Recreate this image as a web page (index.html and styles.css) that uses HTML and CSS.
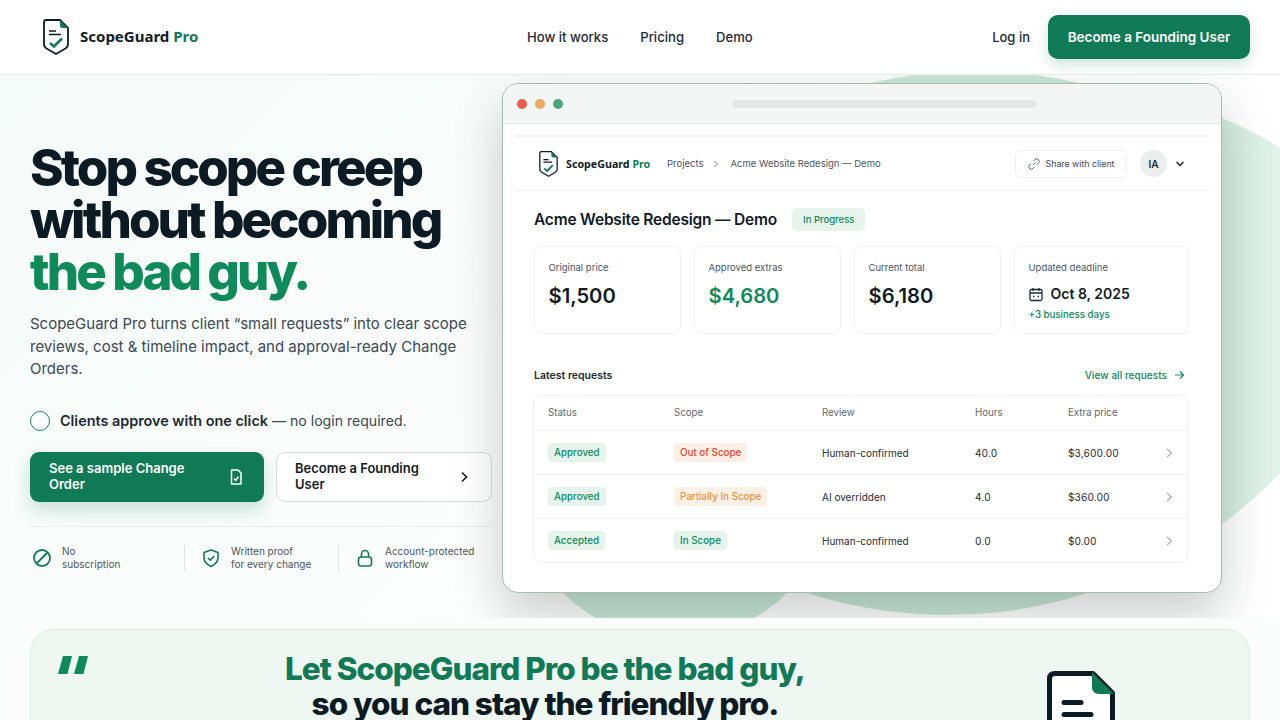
FILE: index.html
```html
<!DOCTYPE html>
<html lang="en">
<head>
    <meta charset="UTF-8">
    <meta name="viewport" content="width=device-width, initial-scale=1.0">
    <title>ScopeGuard Pro</title>
    <link rel="stylesheet" href="styles.css">
</head>
<body>

<svg class="defs" width="0" height="0">
    <symbol id="logo" viewBox="0 0 26 36">
        <path d="M3 1H17L25 9V25Q25 28 22.500 29.500L13 35L3.500 29.500Q1 28 1 25V3Q1 1 3 1Z" fill="#fff" stroke="#0f1c27" stroke-width="1.800" stroke-linejoin="round"/>
        <path d="M17 1L25 9H19.500Q17 9 17 6.500Z" fill="#0f7a55"/>
        <path d="M6 12H13M6 15.500H18" stroke="#0f1c27" stroke-width="1.600" fill="none"/>
        <path d="M7 24L11 27.500L19 19.500" stroke="#0f7a55" stroke-width="2.600" fill="none"/>
    </symbol>
</svg>

<!-- Top bar -->
<header class="topbar">
    <a class="brand">
        <svg class="brand-logo"><use href="#logo"/></svg>
        <span>ScopeGuard <em>Pro</em></span>
    </a>
    <nav class="nav">
        <a>How it works</a>
        <a>Pricing</a>
        <a>Demo</a>
    </nav>
    <div class="topbar-right">
        <a class="login">Log in</a>
        <button class="btn-cta">Become a Founding User</button>
    </div>
</header>

<section class="hero">
    <svg class="blob" viewBox="0 0 1280 543">
        <defs>
            <linearGradient id="blobFill" gradientUnits="userSpaceOnUse" x1="1180" x2="1280" y1="0" y2="0">
                <stop offset="0" stop-color="#c9e7d8"/>
                <stop offset="1" stop-color="#e2f3ea"/>
            </linearGradient>
        </defs>
        <path d="M870 8Q975 -16 1080 8C1130 18 1180 26 1222 43Q1255 57 1280 73C1325 110 1340 260 1280 398A461 461 0 0 1 807 518Z" fill="url(#blobFill)"/>
        <circle cx="675" cy="405" r="159" fill="#c9e7d8"/>
    </svg>

    <div class="hero-copy">
        <h1>Stop scope creep<br>without becoming<br><span>the bad guy.</span></h1>
        <p class="lead">ScopeGuard Pro turns client “small requests” into clear scope reviews, cost &amp; timeline impact, and approval-ready Change Orders.</p>
        <p class="approve"><i class="ring"></i><span><b>Clients approve with one click</b> — no login required.</span></p>
        <div class="hero-btns">
            <a class="btn-primary">
                <span>See a sample Change Order</span>
                <svg width="14" height="16" viewBox="0 0 14 16" fill="none" stroke="#fff" stroke-width="1.500"><path d="M2.500 1H9L12 4V15H2.500Z" stroke-linejoin="round"/><path d="M5 9.500L6.800 11.300L9.500 7.800"/></svg>
            </a>
            <a class="btn-outline">
                <span>Become a Founding User</span>
                <svg width="10" height="12" viewBox="0 0 10 12" fill="none" stroke="#111c26" stroke-width="1.600"><path d="M3 1.500L7.500 6L3 10.500"/></svg>
            </a>
        </div>
        <div class="perks">
            <div class="perk">
                <svg width="20" height="20" viewBox="0 0 20 20" fill="none" stroke="#0f7a55" stroke-width="1.800"><circle cx="10" cy="10" r="8"/><path d="M4.500 15.500L15.500 4.500"/></svg>
                <span>No<br>subscription</span>
            </div>
            <div class="perk">
                <svg width="20" height="20" viewBox="0 0 20 20" fill="none" stroke="#0f7a55" stroke-width="1.600"><path d="M10 2L17 4.500V10C17 14 14 16.500 10 18.500C6 16.500 3 14 3 10V4.500Z" stroke-linejoin="round"/><path d="M7 10L9.300 12.200L13.200 8"/></svg>
                <span>Written proof<br>for every change</span>
            </div>
            <div class="perk">
                <svg width="20" height="20" viewBox="0 0 20 20" fill="none" stroke="#0f7a55" stroke-width="1.600"><rect x="3.500" y="9" width="13" height="9" rx="2.500"/><path d="M6.500 9V6A3.500 3.500 0 0 1 13.500 6V9"/></svg>
                <span>Account-protected<br>workflow</span>
            </div>
        </div>
    </div>

    <!-- App preview -->
    <div class="window">
        <div class="window-bar">
            <i class="dot dot-red"></i><i class="dot dot-amber"></i><i class="dot dot-green"></i>
            <i class="url"></i>
        </div>
        <div class="app">
            <div class="app-head">
                <svg class="app-logo"><use href="#logo"/></svg>
                <span class="app-brand">ScopeGuard <em>Pro</em></span>
                <span class="crumb">Projects</span>
                <svg class="crumb-sep" width="6" height="8" viewBox="0 0 6 8" fill="none" stroke="#7b858d" stroke-width="1"><path d="M1.500 1L4.500 4L1.500 7"/></svg>
                <span class="crumb">Acme Website Redesign — Demo</span>
                <a class="share">
                    <svg width="12" height="12" viewBox="0 0 12 12" fill="none" stroke="#5d6870" stroke-width="1"><path d="M5 7L7.500 4.500M5.500 3L7 1.500A2 2 0 0 1 10.500 5L9 6.500M6.500 9L5 10.500A2 2 0 0 1 1.500 7L3 5.500"/></svg>
                    Share with client
                </a>
                <span class="avatar">IA</span>
                <svg width="10" height="8" viewBox="0 0 10 8" fill="none" stroke="#1d2a34" stroke-width="1.400"><path d="M1.500 2L5 5.500L8.500 2"/></svg>
            </div>

            <div class="app-body">
                <div class="project-title">
                    <h2>Acme Website Redesign — Demo</h2>
                    <span class="progress">In Progress</span>
                </div>

                <div class="stats">
                    <div class="stat">
                        <p class="stat-label">Original price</p>
                        <p class="stat-value">$1,500</p>
                    </div>
                    <div class="stat">
                        <p class="stat-label">Approved extras</p>
                        <p class="stat-value green">$4,680</p>
                    </div>
                    <div class="stat">
                        <p class="stat-label">Current total</p>
                        <p class="stat-value">$6,180</p>
                    </div>
                    <div class="stat">
                        <p class="stat-label">Updated deadline</p>
                        <p class="stat-date">
                            <svg width="14" height="15" viewBox="0 0 14 15" fill="none" stroke="#1d2a34" stroke-width="1.300"><rect x="1" y="2.500" width="12" height="11" rx="1.500"/><path d="M1 6H13M4 1V4M10 1V4M4 9.500H5.500M8.500 9.500H10"/></svg>
                            Oct 8, 2025
                        </p>
                        <p class="stat-note">+3 business days</p>
                    </div>
                </div>

                <div class="requests-head">
                    <h3>Latest requests</h3>
                    <a>View all requests
                        <svg width="11" height="10" viewBox="0 0 11 10" fill="none" stroke="#0f8f5c" stroke-width="1.200"><path d="M1 5H9.500M6 1.500L9.500 5L6 8.500"/></svg>
                    </a>
                </div>

                <div class="table">
                    <div class="row row-head">
                        <span>Status</span><span>Scope</span><span>Review</span><span>Hours</span><span>Extra price</span>
                    </div>
                    <div class="row">
                        <span><b class="pill pill-green">Approved</b></span>
                        <span><b class="pill pill-red">Out of Scope</b></span>
                        <span>Human-confirmed</span><span class="num">40.0</span><span class="num">$3,600.00</span>
                        <svg width="7" height="10" viewBox="0 0 7 10" fill="none" stroke="#a3abb0" stroke-width="1.100"><path d="M1 1L5.500 5L1 9"/></svg>
                    </div>
                    <div class="row">
                        <span><b class="pill pill-green">Approved</b></span>
                        <span><b class="pill pill-orange">Partially In Scope</b></span>
                        <span>AI overridden</span><span class="num">4.0</span><span class="num">$360.00</span>
                        <svg width="7" height="10" viewBox="0 0 7 10" fill="none" stroke="#a3abb0" stroke-width="1.100"><path d="M1 1L5.500 5L1 9"/></svg>
                    </div>
                    <div class="row">
                        <span><b class="pill pill-green">Accepted</b></span>
                        <span><b class="pill pill-green">In Scope</b></span>
                        <span>Human-confirmed</span><span class="num">0.0</span><span class="num">$0.00</span>
                        <svg width="7" height="10" viewBox="0 0 7 10" fill="none" stroke="#a3abb0" stroke-width="1.100"><path d="M1 1L5.500 5L1 9"/></svg>
                    </div>
                </div>
            </div>
        </div>
    </div>
</section>

<!-- Bad guy banner -->
<section class="banner">
    <svg class="quote" width="30" height="18" viewBox="0 0 30 18" fill="#0f8a5b"><path d="M5 0H14L9.500 18H0ZM21 0H30L25.500 18H16Z"/></svg>
    <h2 class="banner-title"><span>Let ScopeGuard Pro be the bad guy,</span><br>so you can stay the friendly pro.</h2>
    <svg class="banner-doc" width="68" height="90" viewBox="0 0 68 90">
        <path d="M8 2.500H46L65.500 22V82Q65.500 87.500 60 87.500H8Q2.500 87.500 2.500 82V8Q2.500 2.500 8 2.500Z" fill="#fff" stroke="#0c1a24" stroke-width="5" stroke-linejoin="round"/>
        <path d="M45 1L67 23H52Q45 23 45 16Z" fill="#0f7a55"/>
        <path d="M17 31.500H34M17 43.500H44" stroke="#0c1a24" stroke-width="5" stroke-linecap="round" fill="none"/>
    </svg>
</section>

</body>
</html>
```

FILE: styles.css
```css
* {
    margin: 0;
    padding: 0;
    box-sizing: border-box;
}
html, body {
    height: 100vh;
    overflow: hidden;
}
body {
    font-family: "Inter", "Liberation Sans", sans-serif;
    color: #0f1c27;
    background: #fbfdfc;
}
em {
    font-style: normal;
}
.defs {
    display: block;
    height: 0;
}

/* top bar */
.topbar {
    height: 75px;
    display: grid;
    grid-template-columns: 484px 1fr auto;
    align-items: center;
    padding: 0 30px 1px 43px;
    background: #fff;
    border-bottom: 1px solid #e6eaea;
}
.brand {
    display: flex;
    align-items: center;
    gap: 11px;
    font-family: "Noto Sans", sans-serif;
    font-weight: 700;
    font-size: 15px;
    line-height: 18px;
    color: #111c26;
}
.brand span {
    margin-top: -2px;
}
.brand-logo {
    width: 26px;
    height: 36px;
}
.brand em {
    color: #0f7a55;
}
.nav {
    display: flex;
    gap: 32px;
    font-size: 13.100px;
    font-weight: 500;
    color: #1d2a34;
}
.topbar-right {
    display: flex;
    align-items: center;
    gap: 18px;
}
.login {
    font-size: 13px;
    font-weight: 500;
    color: #1d2a34;
}
.btn-cta {
    width: 202px;
    height: 44px;
    border: none;
    border-radius: 10px;
    background: #0f7a55;
    color: #fff;
    font-family: inherit;
    font-size: 13.500px;
    font-weight: 600;
    box-shadow: 0 6px 14px rgba(15, 122, 85, 0.2);
}

/* hero */
.hero {
    position: relative;
    height: 543px;
    display: grid;
    grid-template-columns: 462px 720px;
    column-gap: 10px;
    padding: 8px 0 0 30px;
    overflow: hidden;
    background: linear-gradient(135deg, #f5fbf9 0%, #fbfdfc 45%, #ffffff 70%);
}
.blob {
    position: absolute;
    left: 0;
    top: 0;
    width: 1280px;
    height: 543px;
}
.hero-copy {
    position: relative;
    padding-top: 59px;
}
h1 {
    font-size: 51px;
    line-height: 52px;
    font-weight: 800;
    letter-spacing: -2.900px;
    color: #0c1a24;
}
h1 span {
    color: #0f8a5b;
}
.lead {
    margin-top: 15px;
    font-size: 15px;
    line-height: 22.700px;
    color: #3c4853;
}
.approve {
    margin-top: 29.500px;
    display: flex;
    align-items: center;
    gap: 10px;
    font-size: 14.100px;
    color: #3c4853;
}
.approve b {
    font-size: 14.400px;
    font-weight: 600;
    color: #1d2a34;
}
.ring {
    width: 20px;
    height: 20px;
    border: 1.500px solid #0f8a5b;
    border-radius: 50%;
    background: #fff;
}
.hero-btns {
    margin-top: 21px;
    display: grid;
    grid-template-columns: 234px 216px;
    gap: 12px;
}
.btn-primary, .btn-outline {
    height: 50px;
    display: flex;
    align-items: center;
    justify-content: space-between;
    border-radius: 9px;
    font-size: 13px;
    line-height: 16px;
    font-weight: 600;
}
.btn-primary span, .btn-outline span {
    margin-top: -2px;
}
.btn-primary {
    padding: 0 21px 0 19px;
    background: #0f7a55;
    color: #fff;
    box-shadow: 0 8px 18px rgba(15, 122, 85, 0.22);
}
.btn-primary span {
    width: 160px;
}
.btn-outline {
    padding: 0 22px 0 18px;
    background: #fff;
    border: 1px solid #d5dadb;
    color: #111c26;
}
.btn-outline span {
    width: 140px;
}
.perks {
    margin-top: 24px;
    padding-top: 18px;
    display: flex;
    border-top: 1px solid #e8eeec;
}
.perk {
    display: flex;
    align-items: center;
    gap: 10px;
    height: 26px;
    padding-left: 16px;
    border-left: 1px solid #dfe4e3;
    font-size: 10px;
    line-height: 13px;
    color: #4b5661;
}
.perk:first-child {
    width: 154px;
    padding-left: 2px;
    border-left: none;
}
.perk:nth-child(2) {
    width: 154px;
}

/* app preview */
.window {
    position: relative;
    height: 510px;
    background: #fff;
    border: 1px solid #a9b8b1;
    border-radius: 16px;
    overflow: hidden;
    box-shadow: 0 22px 50px rgba(15, 30, 25, 0.22);
}
.window-bar {
    height: 40px;
    display: flex;
    align-items: center;
    padding-left: 14px;
    gap: 8px;
    background: #f4f6f5;
    border-bottom: 1px solid #e2e8e5;
}
.dot {
    width: 10px;
    height: 10px;
    border-radius: 50%;
}
.dot-red {
    background: #ef5b4c;
}
.dot-amber {
    background: #efa95f;
}
.dot-green {
    background: #4aa878;
}
.url {
    width: 304px;
    height: 8px;
    margin-left: 162px;
    border-radius: 4px;
    background: #e4e7e6;
}
.app {
    margin: 11px 12px 0;
    border-top: 2px solid #f0f3f2;
}
.app-head {
    height: 54px;
    display: flex;
    align-items: center;
    padding: 0 24px;
    border-bottom: 1px solid #f0f2f2;
    font-size: 9.500px;
    color: #4b5661;
}
.app-logo {
    width: 19px;
    height: 26px;
    margin-right: 8px;
}
.app-brand {
    width: 101px;
    font-family: "Noto Sans", sans-serif;
    font-weight: 700;
    font-size: 10.700px;
    color: #111c26;
}
.app-brand em {
    color: #0f7a55;
}
.crumb-sep {
    margin: 0 11px 0 10px;
}
.share {
    display: flex;
    align-items: center;
    justify-content: center;
    gap: 6px;
    width: 112px;
    height: 28px;
    margin-left: auto;
    border: 1px solid #eceeee;
    border-radius: 6px;
    font-size: 8.800px;
    color: #3c4853;
}
.avatar {
    width: 27px;
    height: 27px;
    margin: 0 8px 0 13px;
    display: flex;
    align-items: center;
    justify-content: center;
    border-radius: 50%;
    background: #eceeee;
    font-size: 10px;
    font-weight: 600;
    color: #1d2a34;
}
.app-body {
    padding: 17px 21px 0 18px;
}
.project-title {
    display: flex;
    align-items: center;
    gap: 14px;
}
.project-title h2 {
    margin-left: 1px;
    font-size: 15.500px;
    font-weight: 600;
    letter-spacing: -0.200px;
    color: #0f1c27;
}
.progress {
    padding: 6px 11px 5px;
    margin-left: 1px;
    border-radius: 5px;
    background: #e6f4ed;
    color: #0f8a5b;
    font-size: 9.500px;
    line-height: 12px;
    font-weight: 500;
}
.stats {
    margin: 15px 0 0 0.500px;
    display: grid;
    grid-template-columns: 147.500px 147.500px 147.500px 175px;
    gap: 12.500px;
}
.stat {
    height: 88px;
    padding: 15px 14px 0;
    border: 1px solid #f0f2f1;
    border-radius: 8px;
}
.stat-label {
    font-size: 9.500px;
    line-height: 12px;
    color: #4b5661;
}
.stat-value {
    margin-top: 9px;
    font-size: 20.200px;
    line-height: 26px;
    font-weight: 600;
    color: #0f1c27;
}
.stat-value.green {
    color: #0f8a5b;
}
.stat-date {
    margin-top: 10px;
    display: flex;
    align-items: center;
    gap: 8px;
    font-size: 14px;
    line-height: 20px;
    font-weight: 600;
}
.stat-note {
    margin-top: 5px;
    font-size: 9.700px;
    line-height: 12px;
    font-weight: 500;
    color: #0f8a5b;
}
.requests-head {
    margin-top: 34px;
    display: flex;
    justify-content: space-between;
    align-items: center;
    height: 14px;
}
.requests-head h3 {
    margin-left: 1px;
    font-size: 10.500px;
    font-weight: 600;
    color: #1d2a34;
}
.requests-head a {
    display: flex;
    align-items: center;
    gap: 7px;
    padding-right: 3px;
    font-size: 10.100px;
    font-weight: 500;
    color: #0f8a5b;
}
.table {
    margin-top: 13px;
    border: 1px solid #f0f2f1;
    border-radius: 8px;
}
.row {
    height: 44px;
    display: grid;
    grid-template-columns: 126px 148px 153px 93px 98px 7px;
    align-items: center;
    padding-left: 14px;
    border-top: 1px solid #f0f2f1;
    font-size: 10px;
    color: #1d2a34;
}
.num {
    font-variant-numeric: tabular-nums;
}
.row-head {
    height: 34px;
    padding-bottom: 2px;
    border-top: none;
    font-size: 9.700px;
    color: #5d6870;
}
.pill {
    display: inline-block;
    padding: 3px 6px;
    border-radius: 4px;
    font-size: 9.800px;
    line-height: 13px;
    font-weight: 500;
}
.pill-green {
    background: #e6f4ed;
    color: #0f8a5b;
}
.pill-red {
    background: #fdeee6;
    color: #e8492f;
}
.pill-orange {
    background: #fdf0e6;
    color: #ee9444;
}

/* banner */
.banner {
    height: 200px;
    margin: 11px 30px 0;
    display: flex;
    align-items: flex-start;
    padding: 21px 0 0 27px;
    border: 1px solid #d9eee3;
    border-radius: 24px;
    background: #eff7f2;
}
.quote {
    margin-top: 5px;
}
.banner-title {
    margin-left: 197px;
    text-align: center;
    font-size: 31.500px;
    line-height: 35px;
    font-weight: 800;
    letter-spacing: -1px;
    color: #0c1a24;
}
.banner-title span {
    color: #0f7a55;
}
.banner-doc {
    margin: 20px 0 0 242px;
}
```
